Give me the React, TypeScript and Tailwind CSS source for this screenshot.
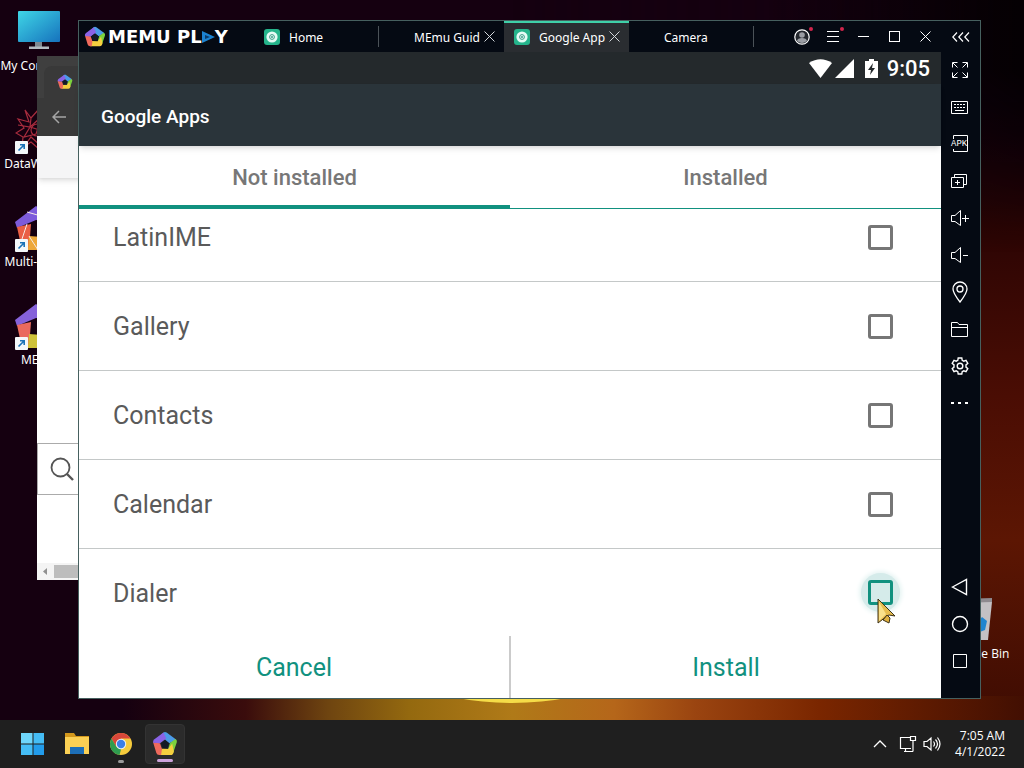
import type { ReactNode } from "react";
import clsx from "clsx";

const apps = ["LatinIME", "Gallery", "Contacts", "Calendar", "Dialer"];

const windowTabs = [
    { name: "Home", icon: true, closable: false, active: false, divider: true },
    { name: "MEmu Guid", icon: false, closable: true, active: false, divider: false },
    { name: "Google App", icon: true, closable: true, active: true, divider: false },
    { name: "Camera", icon: false, closable: false, active: false, divider: true },
];

const PentagonLogo = ({ className }: { className?: string }) => (
    <svg viewBox="0 0 24 24" className={className} aria-hidden="true">
        <path d="M10.5 1.4Q12 .4 13.5 1.4L22.5 8l-6.5 3.2-4-3.4-5-2.4z" fill="#4b9be8" />
        <path d="M21.6 7.4q2 1.2 1.3 3L19.6 20l-4.8-3.2L16.6 11z" fill="#7bd23d" />
        <path d="M20.2 18.6q-.6 3.6-3 3.6H6.8L8.8 16.4l6.2.2 3.6-5z" fill="#f5cf3f" />
        <path d="M8.4 22.2H6.6q-2 0-2.6-2L1 10.4l6.4.8 1.8 5.4z" fill="#ef6a5c" />
        <path d="M1 10.8q-.4-2 1.2-3.2L10.6 1.4 13.2 7 7.4 11.4z" fill="#8a63e6" />
        <path d="M12 8.400l3.800 2.800-1.500 4.500H9.700L8.200 11.200z" fill="#141a26" />
    </svg>
);

const TabIcon = () => (
    <svg viewBox="0 0 16 16" className="size-4 shrink-0" aria-hidden="true">
        <rect width="16" height="16" rx="3" fill="#25b48b" />
        <circle cx="8" cy="8" r="5.6" fill="#e6fbf5" />
        <circle cx="8" cy="8" r="2.4" fill="none" stroke="#3c9c88" />
        <circle cx="8" cy="8" r="1" fill="#3c9c88" />
    </svg>
);

const CloseIcon = () => (
    <svg viewBox="0 0 11 11" className="size-[11px]" fill="none" stroke="currentColor">
        <path d="M.5.5l10 10M10.5.5l-10 10" />
    </svg>
);

const Line = ({ children }: { children: ReactNode }) => (
    <svg viewBox="0 0 18 18" className="size-[18px]" fill="none" stroke="currentColor">
        {children}
    </svg>
);

const sideTools = [
    {
        name: "Full screen",
        icon: (
            <Line>
                <path d="M6.500 1.500h-5v5M2 2l4.500 4.500M11.500 1.500h5v5M16 2l-4.500 4.500M1.500 11.500v5h5M2 16l4.500-4.500M16.500 11.500v5h-5M16 16l-4.500-4.500" />
            </Line>
        ),
    },
    {
        name: "Keymapping",
        icon: (
            <Line>
                <path d="M.5 3.500h16v12H.5zM4 12.500h9" />
                <path d="M3 6.500h11M3 9.500h11" strokeDasharray="2 1" />
            </Line>
        ),
    },
    {
        name: "Install APK",
        icon: (
            <span className="relative block">
                <Line>
                    <path d="M2.500 4V.5h14v16h-14V14" />
                </Line>
                <span className="absolute top-[5px] left-0 font-['Liberation_Mono'] text-[9px] leading-[9px]">
                    APK
                </span>
            </span>
        ),
    },
    {
        name: "Multi-instance",
        icon: (
            <Line>
                <path d="M.5 5.500h12v10H.5zM3.500 5.500v-3h12v10h-3M4 10.500h5M6.500 8v5" />
            </Line>
        ),
    },
    {
        name: "Volume up",
        icon: (
            <Line>
                <path d="M.5 6.500H4l5.500-5v15L4 12.500H.5zM11 9.500h7M14.500 6v7" />
            </Line>
        ),
    },
    {
        name: "Volume down",
        icon: (
            <Line>
                <path d="M.5 6.500H4l5.500-5v15L4 12.500H.5zM12 9.500h5" />
            </Line>
        ),
    },
    {
        name: "Location",
        icon: (
            <svg viewBox="0 0 18 22" className="h-[22px] w-[18px]" fill="none" stroke="currentColor" strokeWidth="1.300">
                <path d="M9 21C5.500 16.500 2 12 2 8a7 7 0 0114 0c0 4-3.500 8.500-7 13z" />
                <circle cx="9" cy="8" r="3" />
            </svg>
        ),
    },
    {
        name: "Shared folder",
        icon: (
            <Line>
                <path d="M.5 16.500v-14h6l1.500 2h8.500v12zM.5 7.500h16" />
            </Line>
        ),
    },
    {
        name: "Settings",
        icon: (
            <svg viewBox="0 0 18 18" className="size-[18px]" fill="none" stroke="currentColor" strokeWidth="1.400">
                <path d="M7.200 1h3.600l.4 2.300 1.600.9 2.200-.9 1.800 3.100-1.800 1.500v2.200l1.800 1.500-1.800 3.100-2.200-.9-1.600.9-.4 2.300H7.200l-.4-2.300-1.600-.9-2.200.9-1.800-3.100L3 10.100V7.900L1.200 6.400 3 3.300l2.200.9 1.600-.9z" />
                <circle cx="9" cy="9" r="2.800" />
            </svg>
        ),
    },
    {
        name: "More",
        icon: (
            <Line>
                <path d="M0 9h3M7 9h3M14 9h3" strokeWidth="2" />
            </Line>
        ),
    },
];

const navTools = [
    { name: "Back", icon: <path d="M1.500 9L15.500 1.500v15z" strokeWidth="1.400" /> },
    { name: "Home screen", icon: <circle cx="9" cy="9" r="7.500" strokeWidth="1.400" /> },
    { name: "Recent apps", icon: <path d="M2.500 2.500h13v13h-13z" /> },
];

const ShortcutBadge = () => (
    <svg viewBox="0 0 13 13" className="absolute bottom-0 left-0 size-[13px]" aria-hidden="true">
        <rect width="13" height="13" rx="1" fill="#f4f8fb" />
        <path d="M3.500 9.500l5-5M5 3.700h4.200V8" fill="none" stroke="#1c73b8" strokeWidth="1.600" />
    </svg>
);

const desktopIcons = [
    {
        name: "My Computer",
        shortcut: false,
        icon: (
            <svg viewBox="0 0 48 48" className="size-12" aria-hidden="true">
                <defs>
                    <linearGradient id="screen" x1="0" y1="0" x2="1" y2="1">
                        <stop offset="0" stopColor="#3fd6e6" />
                        <stop offset="1" stopColor="#1672bd" />
                    </linearGradient>
                </defs>
                <path d="M20 34h7v5h-7z" fill="#7e8790" />
                <path d="M14 38.500h20V41H14z" fill="#b3bac1" />
                <rect x="3" y="3" width="42" height="31" rx="1" fill="url(#screen)" />
            </svg>
        ),
    },
    {
        name: "DataWarrior",
        shortcut: true,
        icon: (
            <svg viewBox="0 0 48 48" className="size-12" fill="none" stroke="#a82c3e" strokeWidth="1.200" aria-hidden="true">
                <path d="M10 4l6 8 8-9 1 10 10-5-3 10 9 3-9 5 4 10-10-3-2 10-8-7-9 6 1-11-7-4 8-5-6-9 11 3zM3 19l12 2 9-8M16 12l-1 9-6 10 12-3 5-15M15 21l13 4 7-17M8 42l8-11 10 9" />
                <circle cx="22" cy="24" r="6" />
            </svg>
        ),
    },
    {
        name: "Multi-MEmu",
        shortcut: true,
        icon: (
            <svg viewBox="0 0 48 48" className="size-12" aria-hidden="true">
                <path d="M0 18L21 2l22 16-22-2L2 24z" fill="#7d5bdb" />
                <path d="M2 23l14-3-2 26H7z" fill="#ea5f45" />
                <path d="M14 32l27 2-5 12H13z" fill="#eea83a" />
                <path d="M12 8l14 4M6 38l6-18M14 32l9 14" stroke="#f6e9e4" />
            </svg>
        ),
    },
    {
        name: "MEmu",
        shortcut: true,
        icon: (
            <svg viewBox="0 0 48 48" className="size-12" aria-hidden="true">
                <path d="M0 18L21 2l22 16-22-2L2 24z" fill="#8562da" />
                <path d="M2 23l14-3-2 26H7z" fill="#ea6a5e" />
                <path d="M14 32l27 2-5 12H13z" fill="#cfc23a" />
            </svg>
        ),
    },
];

const DesktopIcons = () => (
    <ul className="flex w-[78px] flex-col pt-2">
        {desktopIcons.map(({ name, icon, shortcut }) => (
            <li key={name} className="flex h-[98px] flex-col items-center text-xs text-white">
                <span className="relative">
                    {icon}
                    {shortcut && <ShortcutBadge />}
                </span>
                <span className="leading-5">{name}</span>
            </li>
        ))}
    </ul>
);

const BrowserWindow = () => (
    <section className="absolute top-14 bottom-[140px] left-[37px] flex w-64 flex-col bg-white">
        <div className="flex h-[42px] items-end bg-[#3f3f3f] pl-[7px]">
            <div className="flex h-8 w-48 items-center rounded-t-lg bg-[#393939] pl-[13px]">
                <PentagonLogo className="size-4" />
            </div>
        </div>
        <div className="flex h-[38px] items-center bg-[#393939] pl-[15px] text-[#a5a5a5]">
            <svg viewBox="0 0 14 14" className="size-[14px]" fill="none" stroke="currentColor" strokeWidth="1.500">
                <path d="M14 7H1M7 1L1 7l6 6" />
            </svg>
        </div>
        <div className="h-[42px] bg-[#f5f5f6] shadow-md" />
        <div className="flex-1" />
        <div className="flex h-[52px] items-center border border-[#ababab] pl-3 text-[#555]">
            <svg viewBox="0 0 24 24" className="size-6" fill="none" stroke="currentColor" strokeWidth="1.800">
                <circle cx="10.500" cy="10.500" r="9" />
                <path d="M17 17l6 6" strokeWidth="2.400" />
            </svg>
        </div>
        <div className="h-[68px]" />
        <div className="flex h-[17px] items-center bg-[#f4f4f4]">
            <svg viewBox="0 0 17 17" className="size-[17px]" fill="#909090">
                <path d="M10 5v7L6 8.500z" />
            </svg>
            <div className="h-[13px] flex-1 bg-[#bdbdbd]" />
        </div>
    </section>
);

const TitleBar = () => (
    <header className="flex h-[31px] shrink-0 items-stretch text-white">
        <div className="flex w-[174px] items-center pl-[5px]">
            <PentagonLogo className="size-[22px]" />
            <span className="ml-[2px] flex items-center font-['DejaVu_Sans'] text-lg leading-5 font-bold whitespace-nowrap">
                MEMU PL
                <svg viewBox="0 0 13 12" className="h-3 w-[13px]" aria-hidden="true">
                    <path d="M0 0l13 6-13 6z" fill="#1c82cf" />
                    <path d="M3 4l5 2-5 2z" fill="#0a3a68" />
                </svg>
                Y
            </span>
        </div>
        <nav className="flex min-w-0 flex-1 pl-px">
            {windowTabs.map(({ name, icon, closable, active, divider }) => (
                <div
                    key={name}
                    className={clsx(
                        "relative flex w-[125px] items-center pr-[9px] pl-[10px] text-xs",
                        active && "bg-[#2a2d31]"
                    )}
                >
                    {active && <span className="absolute inset-x-0 top-0 h-[2px] bg-[#3fd0a8]" />}
                    <span className="w-[25px] shrink-0">{icon && <TabIcon />}</span>
                    <a href="#" className="min-w-0 flex-1 pt-[2px] whitespace-nowrap">
                        {name}
                    </a>
                    {closable && (
                        <button aria-label={`Close ${name}`} className="ml-1 text-[#d4d8dc]">
                            <CloseIcon />
                        </button>
                    )}
                    {divider && <span className="absolute right-0 h-[21px] w-px bg-[#4b5258]" />}
                </div>
            ))}
        </nav>
        <div className="flex shrink-0">
            <button aria-label="Account" className="relative grid w-[31px] place-items-center">
                <svg viewBox="0 0 16 16" className="size-4">
                    <circle cx="8" cy="8" r="7.200" fill="#24282e" stroke="#fff" strokeWidth="1.200" />
                    <circle cx="8" cy="6" r="2.800" fill="#9a9da3" />
                    <path d="M3 12c0-4 10-4 10 0q-5 4-10 0z" fill="#9a9da3" />
                </svg>
                <span className="absolute top-[6px] right-1 size-1 rounded-full bg-[#d2254c]" />
            </button>
            <button aria-label="Menu" className="relative grid w-[31px] place-items-center">
                <svg viewBox="0 0 12 12" className="size-3" stroke="currentColor">
                    <path d="M0 .5h12M0 5.500h12M0 10.500h12" />
                </svg>
                <span className="absolute top-[6px] right-1 size-1 rounded-full bg-[#d2254c]" />
            </button>
            <button aria-label="Minimize" className="grid w-[31px] place-items-center">
                <span className="h-px w-[11px] bg-white" />
            </button>
            <button aria-label="Maximize" className="grid w-[31px] place-items-center">
                <span className="size-[11px] border border-white" />
            </button>
            <button aria-label="Close" className="grid w-[31px] place-items-center">
                <CloseIcon />
            </button>
            <button aria-label="Collapse" className="grid w-[39px] place-items-center">
                <svg viewBox="0 0 18 10" className="h-[10px] w-[18px]" fill="none" stroke="currentColor" strokeWidth="1.200">
                    <path d="M5 .5L.8 5 5 9.500M11 .5L6.800 5l4.200 4.500M17 .5L12.800 5l4.200 4.500" />
                </svg>
            </button>
        </div>
    </header>
);

const Sidebar = () => (
    <aside className="flex w-[39px] shrink-0 flex-col justify-between pr-px pb-[18px] text-white">
        <div>
            {sideTools.map(({ name, icon }) => (
                <button key={name} aria-label={name} className="grid h-[37px] w-full place-items-center pb-px">
                    {icon}
                </button>
            ))}
        </div>
        <div>
            {navTools.map(({ name, icon }) => (
                <button key={name} aria-label={name} className="grid h-[37px] w-full place-items-center pb-px">
                    <Line>{icon}</Line>
                </button>
            ))}
        </div>
    </aside>
);

const Pointer = () => (
    <svg viewBox="0 0 20 28" className="absolute top-[18px] left-[9px] h-7 w-5" aria-hidden="true">
        <path d="M1 1l17 17-6-1-2 1-9 7z" fill="#e7bd4e" stroke="#3d3218" />
        <path d="M2 4l7 12-7 7z" fill="#f9e08a" />
        <path d="M6 22l4-5 3 3-1 5z" fill="#dfb040" stroke="#3d3218" />
    </svg>
);

const AppRow = ({ name, focused }: { name: string; focused: boolean }) => (
    <li
        className={clsx(
            "flex shrink-0 items-center justify-between pr-12 pl-[34px]",
            focused ? "h-[87px]" : "h-[89px] border-b border-[#c4c8c8]"
        )}
    >
        <label htmlFor={name} className="pt-[2px] text-[25px] leading-8 text-[#5a5a5a]">
            {name}
        </label>
        <span className="relative grid size-[25px] place-items-center">
            {focused && <span className="absolute -inset-[7px] rounded-full bg-[#d5ebea] shadow-[0_0_4px_2px_#e6f4f3]" />}
            <input
                id={name}
                type="checkbox"
                className={clsx(
                    "relative size-[25px] appearance-none rounded-[3px] border-[3px] checked:bg-[#11917f]",
                    focused ? "border-[#11917f]" : "border-[#767676]"
                )}
            />
            {focused && <Pointer />}
        </span>
    </li>
);

const AndroidScreen = () => (
    <main className="flex min-w-0 flex-1 flex-col bg-white font-[Roboto]">
        <div className="flex h-8 shrink-0 items-center justify-end bg-[#24292c] pt-[2px] pr-[11px] text-white">
            <svg viewBox="0 0 70 20" className="mr-2 h-5 w-[70px]" fill="currentColor" aria-hidden="true">
                <path d="M0 4Q11.500-3.500 23 4L11.500 19z" />
                <path d="M45 0v19H26z" />
                <path d="M60 0h5v2h4v17H56V2h4z" />
                <path d="M64 4l-5 7h3l-1 5 5-7h-3z" fill="#24292c" />
            </svg>
            <span className="text-[22px] leading-7 font-medium">9:05</span>
        </div>
        <div className="relative z-10 flex h-[62px] shrink-0 items-center bg-[#2a343a] pt-[3px] pl-[22px] shadow-md">
            <h1 className="text-[19px] leading-6 font-medium text-white">Google Apps</h1>
        </div>
        <div className="flex h-[63px] shrink-0 text-[22px] leading-7 font-medium text-[#777]">
            <button className="flex-1 border-b-4 border-[#11917f] pt-[5px]">Not installed</button>
            <button className="flex-1 border-b border-[#11917f] pt-[2px]">Installed</button>
        </div>
        {/* scrolled to the end, so the first row is cut off by the tabs */}
        <ul className="flex min-h-0 flex-1 flex-col justify-end overflow-hidden">
            {apps.map((name) => (
                <AppRow key={name} name={name} focused={name === "Dialer"} />
            ))}
        </ul>
        <div className="flex h-[62px] shrink-0 text-[25px] text-[#11917f]">
            <button className="flex-1 border-r-2 border-[#cbcbcb] pt-[2px]">Cancel</button>
            <button className="flex-1 pt-[2px]">Install</button>
        </div>
    </main>
);

const Taskbar = () => (
    <footer className="flex h-12 shrink-0 items-center justify-between bg-[#1f1f1f] pr-[19px] pl-[13px] text-white">
        <div className="flex gap-1">
            <button aria-label="Start" className="grid size-10 place-items-center">
                <svg viewBox="0 0 24 24" className="size-6">
                    <path d="M0 1h11.500v10.500H0z" fill="#6fd6fb" />
                    <path d="M12.500 1H23v10.500H12.500zM0 12.500h11.500V23H0z" fill="#45bdf5" />
                    <path d="M12.500 12.500H23V23H12.500z" fill="#229ceb" />
                </svg>
            </button>
            <button aria-label="File Explorer" className="grid size-10 place-items-center">
                <svg viewBox="0 0 26 24" className="h-6 w-[26px]">
                    <path d="M1 1h9l2 3h13v18H1z" fill="#d3981c" />
                    <path d="M1 5h24v17H1z" fill="#fbd054" />
                    <path d="M6 15h14v7H6z" fill="#1d6fb8" />
                </svg>
            </button>
            <button aria-label="Chrome" className="relative grid size-10 place-items-center">
                <svg viewBox="0 0 24 24" className="size-6">
                    <circle cx="12" cy="12" r="11" fill="#f6cb3c" />
                    <path d="M2.500 6.500A11 11 0 0121.500 6.500H12L7.200 14.700z" fill="#d8473a" />
                    <path d="M2.500 6.500l4.800 8.300 4.700 2.700L10.500 23A11 11 0 012.500 6.500z" fill="#2e9c50" />
                    <circle cx="12" cy="12" r="5.200" fill="#eef2f6" />
                    <circle cx="12" cy="12" r="4.200" fill="#3c7fe6" />
                </svg>
                <span className="absolute bottom-px h-[3px] w-[6px] rounded-full bg-[#9a9a9a]" />
            </button>
            <button
                aria-label="MEmu"
                className="relative grid size-10 place-items-center rounded border border-[#333] bg-[#2b2b2b]"
            >
                <PentagonLogo className="size-[26px]" />
                <span className="absolute bottom-px h-[3px] w-4 rounded-full bg-[#cda3dc]" />
            </button>
        </div>
        <div className="flex items-center">
            <button aria-label="Show hidden icons" className="mr-3">
                <svg viewBox="0 0 14 8" className="h-2 w-[14px]" fill="none" stroke="currentColor" strokeWidth="1.300">
                    <path d="M1 7l6-6 6 6" />
                </svg>
            </button>
            <button aria-label="Network" className="mr-[6px]">
                <svg viewBox="0 0 18 18" className="size-[18px]" fill="none" stroke="currentColor" strokeWidth="1.200">
                    <path d="M11 2.500H1.500v11H12M5 16.500h9M6.500 13.500v3M11.500 1.500h5v4h-5zM14 5.500v11" />
                </svg>
            </button>
            <button aria-label="Volume" className="mr-[14px]">
                <svg viewBox="0 0 18 18" className="size-[18px]" fill="none" stroke="currentColor" strokeWidth="1.200">
                    <path d="M1 6.500h3L8 3v12l-4-3.500H1zM10.500 6.500q2 2.500 0 5M12.500 4.500q4 4.500 0 9M14.500 2.500q5 6.500 0 13" />
                </svg>
            </button>
            <time className="text-right font-['Open_Sans'] text-xs leading-4">
                7:05 AM
                <br />
                4/1/2022
            </time>
        </div>
    </footer>
);

const Wallpaper = () => (
    <>
        <div className="absolute inset-0 bg-[#150010] bg-[linear-gradient(180deg,transparent_15%,#2a0404_30%,#4a0d04_55%,#5c1603_75%,#3e0c02_100%)] [mask-image:linear-gradient(90deg,transparent_50%,black_95%)]" />
        <div className="absolute inset-0 bg-[linear-gradient(90deg,transparent_75%,#050003_100%)] [mask-image:linear-gradient(180deg,black_10%,transparent_35%)]" />
        <div className="absolute inset-x-0 bottom-0 h-6 bg-[linear-gradient(90deg,transparent_12%,#3a0c0c_24%,#6e4410_32%,#94690f_40%,#b07a18_50%,#b5661a_60%,#9a4410_68%,#7a2600_80%,#420f02_100%)]" />
        <div className="absolute bottom-[17px] left-1/2 size-[600px] -translate-x-1/2 rounded-full bg-[#f5dc48]" />
    </>
);

export default function App() {
    return (
        <div className="flex h-screen flex-col overflow-hidden bg-black font-['Noto_Sans',sans-serif]">
            <div className="relative isolate flex-1 overflow-hidden bg-[#150010]">
                <div className="absolute inset-0 -z-10">
                    <Wallpaper />
                </div>
                <DesktopIcons />
                <div className="absolute right-2 bottom-14 flex w-[76px] flex-col items-center font-['Open_Sans'] text-xs text-white">
                    <svg viewBox="0 0 48 48" className="size-12" aria-hidden="true">
                        <path d="M6 4l32 2-4 38H12z" fill="#c3c1c4" />
                        <path d="M6 3l32-1v4L6 7z" fill="#8e8a8f" />
                        <path d="M20 30l8-9 5 4-2 9-8 3z" fill="#2085cf" />
                    </svg>
                    <span className="leading-5 whitespace-nowrap">Recycle Bin</span>
                </div>
                <BrowserWindow />
                <section className="absolute top-5 right-[43px] bottom-[21px] left-[78px] flex flex-col border border-[#46605f] bg-[#050a13]">
                    <TitleBar />
                    <div className="flex min-h-0 flex-1">
                        <AndroidScreen />
                        <Sidebar />
                    </div>
                </section>
            </div>
            <Taskbar />
        </div>
    );
}
